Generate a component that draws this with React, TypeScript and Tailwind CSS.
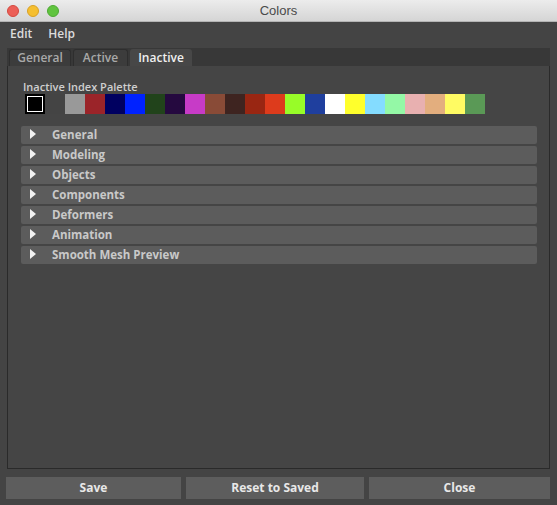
import React from "react";

const swatches = [
  "#000000", "#444444", "#999999", "#9b2429", "#000060", "#0022ff", "#21431b", "#25093f",
  "#c73bc7", "#894b37", "#3e2420", "#992612", "#dd3b1c", "#98fc28", "#1f3f9e", "#ffffff",
  "#ffff2c", "#84dcff", "#94f8a6", "#e8b0b0", "#e3ae7e", "#fffb63", "#5a9956",
];

const frames = ["General", "Modeling", "Objects", "Components", "Deformers", "Animation", "Smooth Mesh Preview"];

export default function App() {
  return (
    <div
      className="w-[557px] h-[505px] bg-[#444444] flex flex-col overflow-hidden"
      style={{ fontFamily: '"Open Sans", "DejaVu Sans", sans-serif' }}
    >
      {/* Title bar */}
      <div className="relative h-[22px] shrink-0 bg-gradient-to-b from-[#ececec] to-[#d5d5d5] border-b border-[#b4b4b4] flex items-center justify-center">
        <div className="absolute left-[7px] top-[5px] flex gap-[8px]">
          <div className="w-[12px] h-[12px] rounded-full bg-[#ec5f57] border border-[#d4493f]" />
          <div className="w-[12px] h-[12px] rounded-full bg-[#f5bf30] border border-[#d9a125]" />
          <div className="w-[12px] h-[12px] rounded-full bg-[#60c43f] border border-[#4ea933]" />
        </div>
        <span className="text-[13px] text-[#4a4a4a]" style={{ fontFamily: '"Liberation Sans", sans-serif' }}>Colors</span>
      </div>

      {/* Menu bar */}
      <div className="h-[22px] shrink-0 flex items-center gap-[16px] pl-[10px] pt-[1px] text-[12px] font-semibold text-[#dcdcdc]">
        <span>Edit</span>
        <span>Help</span>
      </div>

      {/* Tabbed panel */}
      <div className="mt-[4px] mx-[7px] flex flex-col h-[421px]">
        <div className="h-[18px] bg-[#383838] flex items-end pl-[2px] gap-[2px]">
          <div className="h-[17px] w-[62px] rounded-t-[3px] bg-[#3c3c3c] border border-b-0 border-[#2e2e2e] flex items-center justify-center text-[12px] font-semibold text-[#a9a9a9]">General</div>
          <div className="h-[17px] w-[55px] rounded-t-[3px] bg-[#3c3c3c] border border-b-0 border-[#2e2e2e] flex items-center justify-center text-[12px] font-semibold text-[#a9a9a9]">Active</div>
          <div className="h-[17px] w-[62px] rounded-t-[3px] bg-[#474747] flex items-center justify-center text-[12px] font-semibold text-[#f0f0f0]">Inactive</div>
        </div>
        <div className="flex-1 bg-[#454545] border border-t-0 border-[#2a2a2a] flex flex-col pt-[14px]">
          <div className="pl-[15px] text-[11px] font-semibold text-[#cfcfcf] leading-[14px]">Inactive Index Palette</div>
          <div className="flex pl-[17px]">
            {swatches.map((c, i) => (
              <div
                key={i}
                className={i === 0 ? "w-[20px] h-[20px] border-[2px] border-[#000000] outline outline-1 outline-white -outline-offset-[3px]" : "w-[20px] h-[20px]"}
                style={{ backgroundColor: c }}
              />
            ))}
          </div>
          <div className="mt-[12px] ml-[13px] w-[516px] flex flex-col gap-[2px]">
            {frames.map((f) => (
              <div key={f} className="h-[18px] rounded-[2px] bg-[#5c5c5c] flex items-center">
                <svg width="6" height="10" viewBox="0 0 6 10" className="ml-[9px] -mt-[2px]">
                  <polygon points="0,0 6,5 0,10" fill="#f2f2f2" />
                </svg>
                <span className="ml-[16px] text-[11.5px] font-bold text-[#c9c9c9] leading-none">{f}</span>
              </div>
            ))}
          </div>
        </div>
      </div>

      {/* Buttons */}
      <div className="mt-[8px] mx-[6px] flex gap-[5px]">
        <button className="w-[175px] h-[22px] bg-[#5d5d5d] text-[12px] font-bold text-[#e8e8e8]">Save</button>
        <button className="w-[178px] h-[22px] bg-[#5d5d5d] text-[12px] font-bold text-[#e8e8e8]">Reset to Saved</button>
        <button className="w-[181px] h-[22px] bg-[#5d5d5d] text-[12px] font-bold text-[#e8e8e8]">Close</button>
      </div>
    </div>
  );
}
